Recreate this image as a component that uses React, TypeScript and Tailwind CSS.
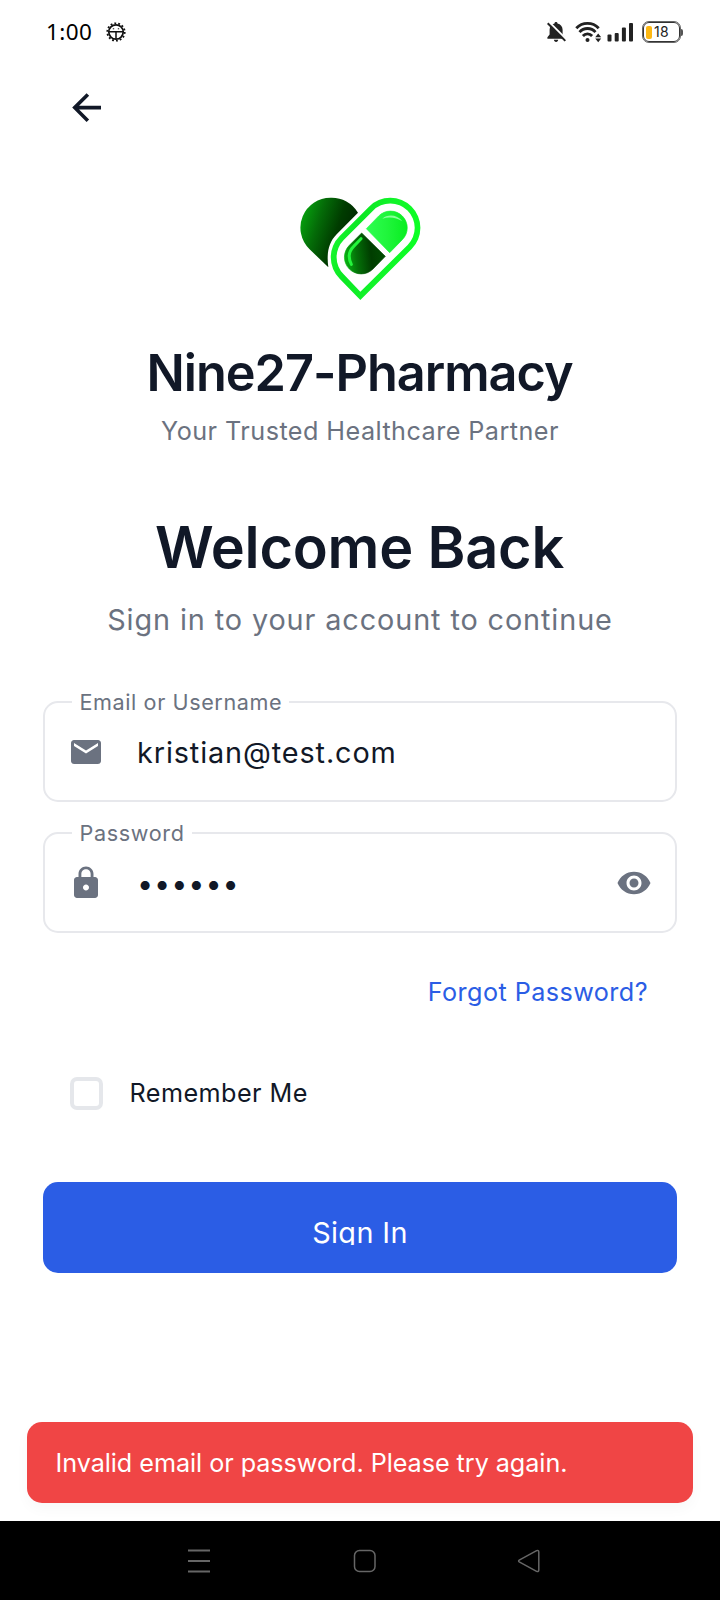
import type { ReactNode } from "react";
import { MdArrowBack, MdEmail, MdLock, MdVisibility } from "react-icons/md";

function StatusBar() {
  return (
    <div className="flex h-16 items-center pl-[46px] pr-[37px] text-[#222]">
      <span className="font-['Noto_Sans',sans-serif] text-[22.500px] leading-8 font-normal tracking-[0.400px] text-black">1:00</span>
      <svg className="ml-[13.500px]" width="20" height="20" viewBox="0 0 20 20" fill="none" stroke="#111">
        <circle cx="10" cy="10" r="8.700" strokeWidth="1.800" strokeDasharray="1.900 2.004" />
        <circle cx="10" cy="10" r="7.200" strokeWidth="1.700" />
        <path d="M3 9.800h14M10 9.800v7" strokeWidth="1.500" />
        <path d="M6.800 6.800h1.400M11.800 6.800h1.400" strokeWidth="1" />
      </svg>
      <svg className="ml-auto" width="21" height="22" viewBox="0 0 21 22">
        <path
          fill="#222"
          d="M10 1c.9 0 1.500.6 1.500 1.400 3.100.7 5.100 3.200 5.100 6.300v4.800l2.200 2.700v1.600H1.400v-1.600l2.200-2.700V8.700c0-3.100 1.900-5.600 4.900-6.300C8.500 1.600 9.100 1 10 1zM7.900 18.800h4.300c0 1.200-.9 2.100-2.100 2.100s-2.200-.9-2.200-2.100z"
        />
        <path d="M3.300 1.300l17.200 17.200" stroke="#fff" strokeWidth="2" />
        <path d="M1.700 2.300l17.600 17.600" stroke="#222" strokeWidth="2" />
      </svg>
      <svg className="ml-[8px]" width="27" height="22" viewBox="0 0 27 22" fill="none" stroke="#222" strokeWidth="2.800">
        <path d="M1.300 7.200a15.200 15.200 0 0 1 22.400 0" />
        <path d="M4.500 11.100a10.700 10.700 0 0 1 16 0" />
        <path d="M7.900 15a6 6 0 0 1 9.200 0" />
        <circle cx="12.500" cy="18.900" r="2" fill="#222" stroke="none" />
        <path d="M20.200 16.200l3-3.700 3 3.700zM20.200 17.600l3 3.700 3-3.700z" fill="#222" stroke="none" />
      </svg>
      <svg className="ml-[5px]" width="27" height="20" viewBox="0 0 27 20" fill="#222">
        <rect x="0.500" y="12.500" width="4" height="7" rx="1" />
        <rect x="7.700" y="11" width="4" height="8.500" rx="1" />
        <rect x="14.900" y="5.500" width="4" height="14" rx="1" />
        <rect x="22" y="1" width="4" height="18.500" rx="1" />
      </svg>
      <div className="ml-[9px] flex items-center">
        <div className="flex h-[20px] w-[37px] items-center rounded-[6px] border-[1.500px] border-[#333] pl-[2px] outline outline-[0.500px] outline-[#666]">
          <span className="h-[13px] w-[6px] rounded-[2px] bg-[#fdb813]" />
          <span className="ml-[2px] font-['Inter',sans-serif] text-[14px] leading-4 tracking-[0.300px] text-[#222]">18</span>
        </div>
        <span className="ml-[1px] h-[7px] w-[2px] rounded-r-sm bg-[#555]" />
      </div>
    </div>
  );
}

function Logo() {
  return (
    <svg width="140" height="125" viewBox="0 0 420 375" className="mx-auto">
      <defs>
        <linearGradient id="lobe" x1="0" y1="0.300" x2="0.800" y2="0.620">
          <stop offset="0" stopColor="#06a00e" />
          <stop offset="0.350" stopColor="#046c08" />
          <stop offset="0.750" stopColor="#003c00" />
          <stop offset="1" stopColor="#002e00" />
        </linearGradient>
        <linearGradient id="ring" x1="0" y1="0" x2="1" y2="0.300">
          <stop offset="0" stopColor="#1eff35" />
          <stop offset="0.350" stopColor="#0be822" />
          <stop offset="0.650" stopColor="#12f42a" />
          <stop offset="1" stopColor="#0cff25" />
        </linearGradient>
        <linearGradient id="light" x1="0" y1="0" x2="1" y2="0">
          <stop offset="0" stopColor="#2cff50" />
          <stop offset="0.500" stopColor="#20f53c" />
          <stop offset="1" stopColor="#08ee20" />
        </linearGradient>
        <linearGradient id="dark" x1="0" y1="0.600" x2="1" y2="0.500">
          <stop offset="0" stopColor="#07b512" />
          <stop offset="0.300" stopColor="#047008" />
          <stop offset="0.650" stopColor="#003d00" />
          <stop offset="1" stopColor="#014d02" />
        </linearGradient>
      </defs>
      <path d="M204 83A91 91 0 0 0 122 38A90 90 0 0 0 58 192L115 247C110 210 113 175 140 148Z" fill="url(#lobe)" />
      <path d="M211 345L149 281A90 90 0 0 1 149 153L237 65A90 90 0 0 1 365 192Z" fill="url(#ring)" />
      <path d="M211 320L161 268A73 73 0 0 1 161 165L249 77A73 73 0 0 1 353 180Z" fill="#fff" />
      <path d="M229 131L266 93A50 50 0 0 1 337 164L299 203Z" fill="url(#light)" stroke="url(#light)" strokeWidth="2" />
      <path d="M215 144L178 181A50 50 0 0 0 249 252L286 214Z" fill="url(#dark)" stroke="url(#dark)" strokeWidth="2" />
      <path d="M277 101C292 87 322 88 337 109C320 98 298 94 277 101Z" fill="#8bff9c" />
      <path d="M213 161L191 184C176 199 174 218 184 238" fill="none" stroke="#24f53c" strokeWidth="9" strokeLinecap="round" />
    </svg>
  );
}

function Field({ label, labelTracking, icon, children }: { label: string; labelTracking: string; icon: ReactNode; children: ReactNode }) {
  return (
    <div className="relative flex h-[101px] items-center rounded-[15px] border-2 border-[#e7e8ec] pr-[23.500px] pl-[23.200px]">
      <span className={`absolute top-[-14px] left-[27px] bg-white pr-[7px] pl-[7.500px] text-[21.600px] leading-[27px] text-[#6b7280] ${labelTracking}`}>{label}</span>
      {icon}
      {children}
    </div>
  );
}

export default function App() {
  return (
    <div className="flex h-[1600px] w-[720px] flex-col overflow-hidden bg-white font-['Inter',sans-serif] text-[#111827]">
      <StatusBar />
      <header className="flex h-[87px] items-center pl-[65px]">
        <MdArrowBack size={43.2} />
      </header>
      <main className="flex flex-col px-[43px]">
        <div className="mt-[34px] flex">
          <Logo />
        </div>
        <h1 className="mt-[33px] -ml-px text-center text-[50.400px] leading-[60px] font-semibold tracking-[-1px] whitespace-nowrap">Nine27-Pharmacy</h1>
        <p className="mt-[9.500px] text-center text-[25.200px] leading-9 tracking-[0.450px] text-[#6b7280]">Your Trusted Healthcare Partner</p>
        <h2 className="mt-[63.500px] -ml-px text-center text-[57.600px] leading-[70px] font-semibold tracking-[-0.200px]">Welcome Back</h2>
        <p className="mt-[18px] text-center text-[28.800px] leading-10 tracking-[0.900px] text-[#6b7280]">Sign in to your account to continue</p>

        <div className="mt-[61px] flex flex-col gap-[30px]">
          <Field label="Email or Username" labelTracking="tracking-[0.590px]" icon={<MdEmail size={36} className="text-[#6b7280]" />}>
            <span className="mt-[2px] ml-[32.800px] text-[28.800px] leading-10 tracking-[0.900px]">kristian@test.com</span>
          </Field>
          <Field label="Password" labelTracking="tracking-[0.650px]" icon={<MdLock size={36} className="text-[#6b7280]" />}>
            <span className="mt-[2px] ml-[32.800px] text-[28.800px] leading-10 tracking-[0.900px]">••••••</span>
            <MdVisibility size={36} className="ml-auto text-[#6b7280]" />
          </Field>
        </div>

        <a className="mt-[40.500px] mr-[29px] self-end text-[25.200px] leading-9 tracking-[0.430px] text-[#2b5de5]">Forgot Password?</a>

        <label className="mt-[65px] ml-[27px] flex items-center">
          <span className="mt-px size-[33px] rounded-[7px] border-4 border-[#e5e7eb]" />
          <span className="ml-[26.500px] text-[25.200px] leading-9 tracking-[0.450px]">Remember Me</span>
        </label>

        <button className="mt-[71px] flex h-[91px] justify-center rounded-[15px] bg-[#2b5de5] pt-[33px] text-white">
          <span className="h-[30px] overflow-hidden text-[28.800px] leading-[36px] font-normal tracking-[0.390px]">Sign In</span>
        </button>
      </main>

      <div className="mx-[27px] mt-auto mb-[18px] flex h-[81px] shrink-0 items-center rounded-[15px] bg-[#f04545] pl-[28.500px] shadow-[0_6px_14px_rgba(0,0,0,0.03)]">
        <span className="text-[25.200px] leading-9 tracking-[-0.050px] text-white">Invalid email or password. Please try again.</span>
      </div>

      <nav className="flex h-[79px] shrink-0 items-center justify-between bg-black pr-[179px] pl-[187px]">
        <svg width="24" height="24" viewBox="0 0 24 24" stroke="#666" strokeWidth="1.800">
          <path d="M1 1.500h22M1 12h22M1 22.500h22" />
        </svg>
        <svg className="ml-[2px]" width="24" height="24" viewBox="0 0 24 24" fill="none" stroke="#666" strokeWidth="1.500">
          <rect x="1.500" y="1.500" width="20.500" height="21" rx="5" />
        </svg>
        <svg width="24" height="24" viewBox="0 0 24 24" fill="none" stroke="#666" strokeWidth="1.500" strokeLinejoin="round">
          <path d="M2.200 11.200L19.600 1.600Q21.800 .800 21.800 3V21Q21.800 23.200 19.600 22.400L2.200 12.800Q1 12 2.200 11.200Z" />
        </svg>
      </nav>
    </div>
  );
}
